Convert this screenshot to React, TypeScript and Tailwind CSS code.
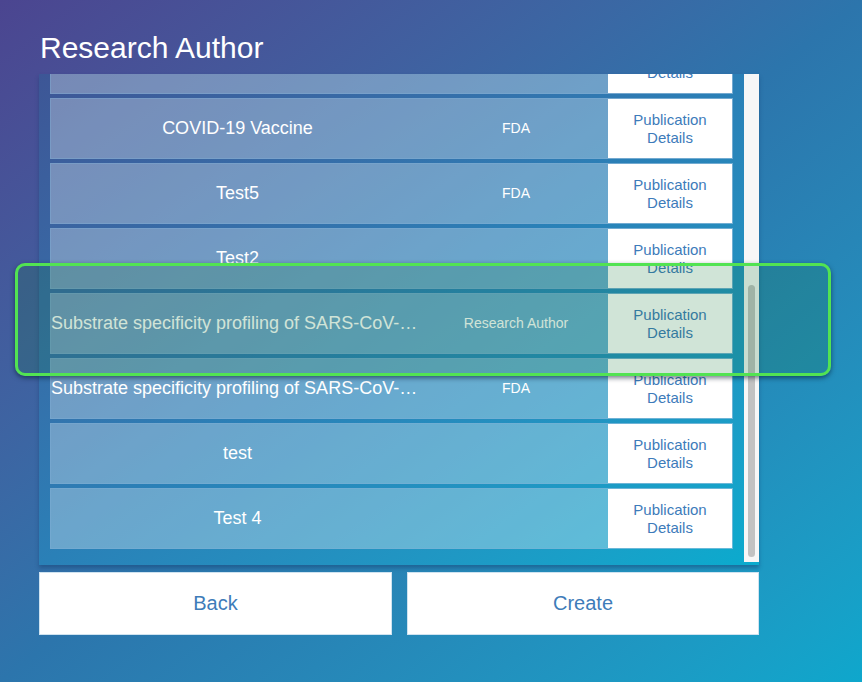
import React from "react";

type Row = { title: string; org: string };

const rows: Row[] = [
  { title: "Research", org: "FDA" },
  { title: "COVID-19 Vaccine", org: "FDA" },
  { title: "Test5", org: "FDA" },
  { title: "Test2", org: "" },
  { title: "Substrate specificity profiling of SARS-CoV-2 main protease", org: "Research Author" },
  { title: "Substrate specificity profiling of SARS-CoV-2 main protease", org: "FDA" },
  { title: "test", org: "" },
  { title: "Test 4", org: "" },
];

function ListRow({ row }: { row: Row }) {
  return (
    <div className="flex h-[61px] w-[683px] shrink-0 border border-[#7fb0d8]/40 bg-white/30">
      <div className="flex w-[373px] items-center">
        <div className="w-full truncate text-center text-[18px] text-white">{row.title}</div>
      </div>
      <div className="flex w-[184px] items-center justify-center text-[14px] text-white">{row.org}</div>
      <div className="flex flex-1 items-center justify-center bg-white text-center text-[15px] leading-[18px] text-[#3d7bba]">
        Publication
        <br />
        Details
      </div>
    </div>
  );
}

export default function App() {
  return (
    <div
      className="relative h-[682px] w-[862px] overflow-hidden bg-linear-to-br from-[#4b4590] via-[#2c75ac] to-[#0ea7cc]"
      style={{ fontFamily: '"Liberation Sans", Arial, sans-serif' }}
    >
      <h1 className="ml-[40px] pt-[30px] text-[30px] leading-[36px] text-white">Research Author</h1>

      <div className="ml-[39px] mt-[8px] flex h-[491px] w-[720px] bg-linear-to-br from-[#3d5696] via-[#2a80b7] to-[#09abce] shadow-[0_3px_4px_rgba(20,60,110,0.45)]">
        <div className="h-full flex-1 overflow-hidden px-[11px]">
          <div className="-mt-[41px] flex flex-col gap-[4px]">
            {rows.map((r, i) => (
              <ListRow key={i} row={r} />
            ))}
          </div>
        </div>
        <div className="flex h-[488px] w-[15px] flex-col items-center bg-[#f7f7f7] pt-[211px]">
          <div className="h-[272px] w-[7px] rounded-full bg-[#c2c2c2]" />
        </div>
      </div>

      <div className="ml-[39px] mt-[7px] flex gap-[15px]">
        <button className="h-[63px] w-[353px] border border-[#cfe3f0] bg-white pb-[2px] text-[20px] text-[#3e7cb9]">
          Back
        </button>
        <button className="h-[63px] w-[352px] border border-[#cfe3f0] bg-white pb-[2px] text-[20px] text-[#3e7cb9]">
          Create
        </button>
      </div>

      <div className="absolute left-[15px] top-[263px] h-[113px] w-[816px] rounded-[10px] border-[3px] border-[#52e352] bg-[rgba(20,120,55,0.2)] shadow-[0_2px_5px_rgba(0,20,40,0.55)]" />
    </div>
  );
}
